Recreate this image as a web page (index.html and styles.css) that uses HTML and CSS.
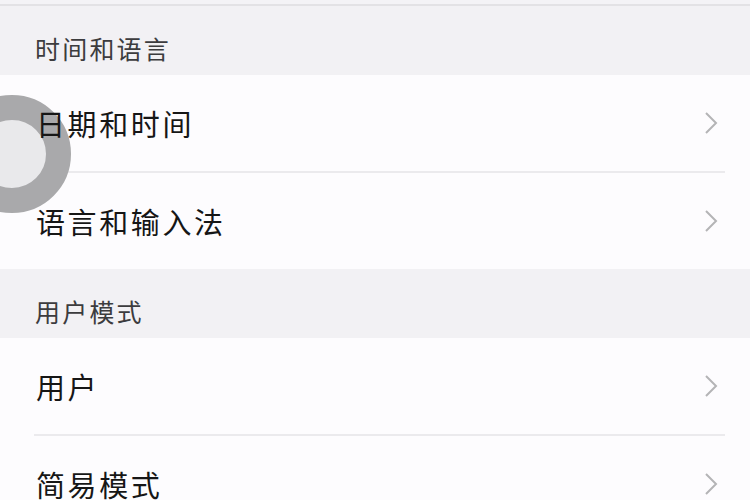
FILE: index.html
```html
<!DOCTYPE html>
<html lang="zh">
<head>
<meta charset="utf-8">
<link rel="stylesheet" href="styles.css">
</head>
<body>
<div class="topbar"></div>
<div class="section-title">时间和语言</div>
<div class="group">
  <div class="row"><span class="label">日期和时间</span><svg class="chev" viewBox="0 0 14 24"><path d="M2 2 L12 12 L2 22" /></svg></div>
  <div class="divider"></div>
  <div class="row"><span class="label">语言和输入法</span><svg class="chev" viewBox="0 0 14 24"><path d="M2 2 L12 12 L2 22" /></svg></div>
</div>
<div class="section-title">用户模式</div>
<div class="group">
  <div class="row"><span class="label">用户</span><svg class="chev" viewBox="0 0 14 24"><path d="M2 2 L12 12 L2 22" /></svg></div>
  <div class="divider"></div>
  <div class="row"><span class="label">简易模式</span><svg class="chev" viewBox="0 0 14 24"><path d="M2 2 L12 12 L2 22" /></svg></div>
</div>
<div class="touch"></div>
</body>
</html>
```
FILE: styles.css
```css
html, body {
  margin: 0;
  padding: 0;
}
body {
  width: 750px;
  height: 500px;
  overflow: hidden;
  position: relative;
  background: #fdfcfe;
  font-family: "Noto Sans CJK SC", "Noto Sans", sans-serif;
}
.topbar {
  height: 4px;
  background: #f4f3f6;
  border-bottom: 2px solid #e3e2e5;
}
.section-title {
  height: 69px;
  box-sizing: border-box;
  background: #f2f1f4;
  display: flex;
  align-items: flex-end;
  padding: 0 0 13px 35px;
  font-size: 25px;
  line-height: 27px;
  letter-spacing: 2.2px;
  color: #3c3c3e;
}
.group {
  background: transparent;
}
.row {
  height: 96px;
  display: flex;
  align-items: center;
  justify-content: space-between;
  padding: 0 32px 0 36px;
}
.label {
  position: relative;
  z-index: 2;
  font-size: 29px;
  letter-spacing: 2.6px;
  color: #161616;
}
.chev {
  width: 14px;
  height: 24px;
  fill: none;
  stroke: #b4b4b6;
  stroke-width: 2;
}
.divider {
  height: 2px;
  background: #ebeaed;
  margin: 0 25px 0 34px;
}
.touch {
  position: absolute;
  z-index: 1;
  left: -47px;
  top: 95px;
  width: 68px;
  height: 68px;
  border-radius: 50%;
  border: 25px solid #a9a9ab;
  background: #e9e9eb;
}
```
